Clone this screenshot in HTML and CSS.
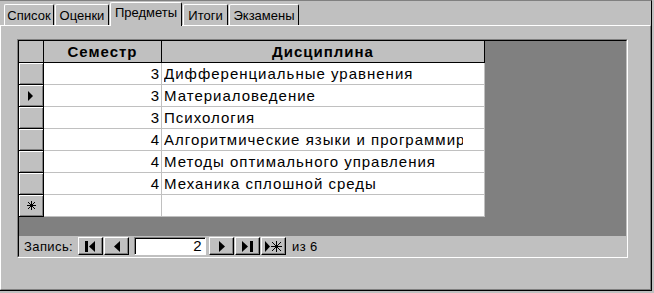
FILE: index.html
```html
<!DOCTYPE html>
<html lang="ru">
<head>
    <meta charset="UTF-8">
    <title>Предметы</title>
    <link rel="stylesheet" href="styles.css">
</head>
<body>
    <div class="window">
        <div class="tabs">
            <div class="tab" id="tab-list">Список</div>
            <div class="tab" id="tab-marks">Оценки</div>
            <div class="tab active" id="tab-subjects">Предметы</div>
            <div class="tab" id="tab-totals">Итоги</div>
            <div class="tab" id="tab-exams">Экзамены</div>
        </div>
        <div class="panel">
            <div class="subform">
                <div class="subform-inner">
                    <div class="sheet-area">
                        <div class="sheet">
                            <div class="hsel"></div>
                            <div class="hcell">Семестр</div>
                            <div class="hcell">Дисциплина</div>

                            <div class="sel"></div>
                            <div class="cell num">3</div>
                            <div class="cell"><span class="clip">Дифференциальные уравнения</span></div>

                            <div class="sel">
                                <svg width="6" height="10" viewBox="0 0 6 10"><polygon points="0,0 5,5 0,10" fill="#000"/></svg>
                            </div>
                            <div class="cell num">3</div>
                            <div class="cell"><span class="clip">Материаловедение</span></div>

                            <div class="sel"></div>
                            <div class="cell num">3</div>
                            <div class="cell"><span class="clip">Психология</span></div>

                            <div class="sel"></div>
                            <div class="cell num">4</div>
                            <div class="cell"><span class="clip">Алгоритмические языки и программирование</span></div>

                            <div class="sel"></div>
                            <div class="cell num">4</div>
                            <div class="cell"><span class="clip">Методы оптимального управления</span></div>

                            <div class="sel"></div>
                            <div class="cell num">4</div>
                            <div class="cell"><span class="clip">Механика сплошной среды</span></div>

                            <div class="sel">
                                <svg width="9" height="9" viewBox="0 0 9 9" stroke="#000" stroke-width="1">
                                    <line x1="4.5" y1="0" x2="4.5" y2="9"/>
                                    <line x1="0" y1="4.5" x2="9" y2="4.5"/>
                                    <line x1="1" y1="1" x2="8" y2="8"/>
                                    <line x1="8" y1="1" x2="1" y2="8"/>
                                </svg>
                            </div>
                            <div class="cell num"></div>
                            <div class="cell"></div>
                        </div>
                    </div>
                    <div class="navbar">
                        <span class="nav-label">Запись:</span>
                        <div class="nav-btn">
                            <svg width="11" height="11" viewBox="0 0 11 11"><rect x="0" y="0" width="3" height="11" fill="#000"/><polygon points="10,0 4,5.5 10,11" fill="#000"/></svg>
                        </div>
                        <div class="nav-btn">
                            <svg width="6" height="11" viewBox="0 0 6 11"><polygon points="6,0 0,5.5 6,11" fill="#000"/></svg>
                        </div>
                        <div class="nav-field">2</div>
                        <div class="nav-btn">
                            <svg width="6" height="11" viewBox="0 0 6 11"><polygon points="0,0 6,5.5 0,11" fill="#000"/></svg>
                        </div>
                        <div class="nav-btn">
                            <svg width="11" height="11" viewBox="0 0 11 11"><polygon points="0,0 6,5.5 0,11" fill="#000"/><rect x="8" y="0" width="3" height="11" fill="#000"/></svg>
                        </div>
                        <div class="nav-btn">
                            <svg width="17" height="11" viewBox="0 0 17 11">
                                <polygon points="0,0 5,5.5 0,11" fill="#000"/>
                                <g stroke="#000" stroke-width="1">
                                    <line x1="11.5" y1="0" x2="11.5" y2="11"/>
                                    <line x1="6" y1="5.5" x2="17" y2="5.5"/>
                                    <line x1="7" y1="1" x2="16" y2="10"/>
                                    <line x1="16" y1="1" x2="7" y2="10"/>
                                </g>
                            </svg>
                        </div>
                        <span class="nav-count">из 6</span>
                    </div>
                </div>
            </div>
        </div>
    </div>
</body>
</html>
```

FILE: styles.css
```css
body {
    margin: 0;
    background-color: #c0c0c0;
    font-family: "Liberation Sans", Arial, sans-serif;
    color: #000;
}

.window {
    width: 651px;
    height: 289px;
    border-top: 1px solid #808080;
    border-right: 1px solid #000;
    border-bottom: 1px solid #000;
}

/* tabs */
.tabs {
    display: flex;
    align-items: flex-end;
    height: 24px;
    padding-left: 4px;
    font-size: 13px;
}

.tab {
    height: 21px;
    box-sizing: border-box;
    padding-top: 3px;
    text-align: center;
    border-top: 1px solid #fff;
    border-left: 1px solid #fff;
    border-right: 1px solid #000;
    border-radius: 2px 2px 0 0;
    margin-right: 1px;
}

.tab.active {
    height: 24px;
    margin-bottom: -1px;
    padding-top: 2px;
    position: relative;
    background-color: #c0c0c0;
}

#tab-list { width: 50px; }
#tab-marks { width: 54px; }
#tab-subjects { width: 72px; }
#tab-totals { width: 45px; }
#tab-exams { width: 70px; }

/* main panel */
.panel {
    width: 651px;
    height: 265px;
    box-sizing: border-box;
    border-top: 1px solid #fff;
    border-left: 1px solid #fff;
    border-right: 1px solid #808080;
    border-bottom: 1px solid #808080;
    padding: 13px 0 0 16px;
}

.subform {
    width: 609px;
    height: 217px;
    border-style: solid;
    border-width: 1px;
    border-color: #808080 #fff #fff #808080;
}

.subform-inner {
    height: 215px;
    border-style: solid;
    border-width: 1px;
    border-color: #000 #c0c0c0 #c0c0c0 #000;
    display: flex;
    flex-direction: column;
}

.sheet-area {
    height: 195px;
    background-color: #808080;
}

.sheet {
    display: grid;
    grid-template-columns: 25px 118px 323px;
    grid-auto-rows: 22px;
    width: 466px;
    font-size: 15px;
    letter-spacing: 1px;
}

.hsel,
.hcell,
.sel {
    background-color: #c0c0c0;
    border-right: 1px solid #000;
    border-bottom: 1px solid #000;
    box-sizing: border-box;
}

.hcell {
    font-weight: bold;
    text-align: center;
    line-height: 21px;
}

.sel {
    box-shadow: inset 1px 1px #fff, inset -1px -1px #808080;
    display: flex;
    align-items: center;
    justify-content: center;
}

.cell {
    background-color: #fff;
    border-right: 1px solid #c0c0c0;
    border-bottom: 1px solid #c0c0c0;
    box-sizing: border-box;
    line-height: 21px;
    padding: 0 1px 0 2px;
    white-space: nowrap;
    overflow: hidden;
}

.clip {
    display: block;
    width: 299px;
    overflow: hidden;
}

.num {
    text-align: right;
}

/* record navigation */
.navbar {
    height: 20px;
    display: flex;
    align-items: center;
    font-size: 13px;
    letter-spacing: 0.4px;
    padding-left: 5px;
}

.nav-label {
    margin-right: 5px;
}

.nav-btn {
    width: 25px;
    height: 18px;
    box-sizing: border-box;
    background-color: #c0c0c0;
    border-style: solid;
    border-width: 1px;
    border-color: #fff #000 #000 #fff;
    box-shadow: inset -1px -1px #808080;
    margin-right: 1px;
    display: flex;
    align-items: center;
    justify-content: center;
}

.nav-field {
    width: 72px;
    height: 18px;
    box-sizing: border-box;
    margin: 0 3px 0 4px;
    background-color: #fff;
    border-style: solid;
    border-width: 1px;
    border-color: #808080 #fff #fff #808080;
    box-shadow: inset 1px 1px #000;
    text-align: right;
    padding-right: 3px;
    line-height: 16px;
    font-size: 15px;
}

.nav-count {
    margin-left: 5px;
}
```
